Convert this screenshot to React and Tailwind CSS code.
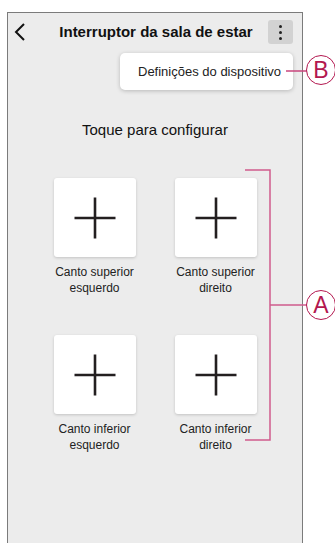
import React from "react";

function Plus() {
  return (
    <svg width="42" height="42" viewBox="0 0 42 42">
      <line x1="21" y1="0.5" x2="21" y2="41.5" stroke="#231f20" strokeWidth="2.6" />
      <line x1="0.5" y1="21" x2="41.5" y2="21" stroke="#231f20" strokeWidth="2.6" />
    </svg>
  );
}

function Tile({ l1, l2 }) {
  return (
    <div className="flex flex-col items-center">
      <div className="w-[82px] h-[79px] bg-white rounded-[3px] shadow-[0_1px_3px_rgba(0,0,0,0.18)] flex items-center justify-center">
        <Plus />
      </div>
      <div className="mt-[7px] text-[12px] leading-[16px] text-[#222] text-center whitespace-nowrap">
        <div>{l1}</div>
        <div>{l2}</div>
      </div>
    </div>
  );
}

export default function App() {
  return (
    <div
      className="relative w-[335px] h-[543px] bg-white overflow-hidden"
      style={{ fontFamily: '"Liberation Sans", Arial, sans-serif' }}
    >
      <div className="ml-[7px] mt-[12px] w-[296px] h-[531px] border-[1.5px] border-b-0 border-[#7b7b7b] bg-[#ececec] flex flex-col">
        <div className="h-[38px] flex items-center relative shrink-0">
          <svg className="ml-[5px]" width="14" height="18" viewBox="0 0 14 18">
            <path d="M11 1 L3 9 L11 17" fill="none" stroke="#111" strokeWidth="2" />
          </svg>
          <div className="flex-1 text-center text-[15px] font-bold text-[#111] ml-[21px] mr-[4px] whitespace-nowrap">
            Interruptor da sala de estar
          </div>
          <div className="mr-[9px] w-[25px] h-[24px] bg-[#d2d2d2] rounded-[3px] flex flex-col items-center justify-center gap-[3px]">
            <span className="w-[3px] h-[3px] rounded-full bg-[#222]" />
            <span className="w-[3px] h-[3px] rounded-full bg-[#222]" />
            <span className="w-[3px] h-[3px] rounded-full bg-[#222]" />
          </div>
        </div>

        <div className="mt-[69px] text-center text-[15px] leading-[20px] text-[#111]">
          Toque para configurar
        </div>

        <div className="mt-[38px] grid grid-cols-[82px_82px] justify-center gap-x-[39px] gap-y-[39px]">
          <Tile l1="Canto superior" l2="esquerdo" />
          <Tile l1="Canto superior" l2="direito" />
          <Tile l1="Canto inferior" l2="esquerdo" />
          <Tile l1="Canto inferior" l2="direito" />
        </div>
      </div>

      {/* popup menu */}
      <div className="absolute left-[120px] top-[53px] w-[173px] h-[37px] bg-white rounded-[5px] shadow-[0_1px_4px_rgba(0,0,0,0.22)] flex items-center pl-[18px] text-[13px] text-[#222]">
        Definições do dispositivo
      </div>

      {/* callout lines */}
      <svg className="absolute left-0 top-0 pointer-events-none" width="335" height="543">
        <line x1="286" y1="71" x2="307" y2="71" stroke="#c9457d" strokeWidth="1.5" />
        <polyline points="245,170 270,170 270,440 245,440" fill="none" stroke="#cf5b8c" strokeWidth="1.5" />
        <line x1="270" y1="305" x2="307" y2="305" stroke="#cf5b8c" strokeWidth="1.5" />
      </svg>

      <div className="absolute left-[306px] top-[55px] w-[30px] h-[30px] rounded-full border-[1.5px] border-[#b3174f] bg-white flex items-center justify-center text-[23px] leading-none text-[#b3174f]">
        B
      </div>
      <div className="absolute left-[306px] top-[290px] w-[30px] h-[30px] rounded-full border-[1.5px] border-[#b3174f] bg-white flex items-center justify-center text-[23px] leading-none text-[#b3174f]">
        A
      </div>
    </div>
  );
}
